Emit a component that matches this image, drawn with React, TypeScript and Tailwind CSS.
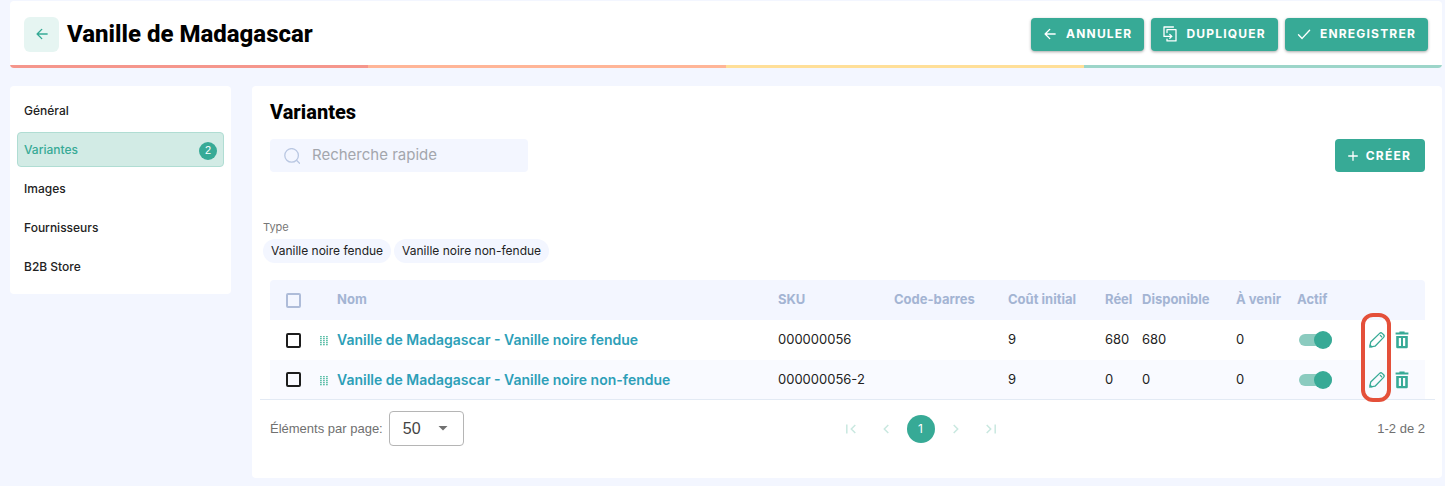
import { useState, type ReactNode } from "react";

const navItems = [
  { label: "Général" },
  { label: "Variantes", count: 2 },
  { label: "Images" },
  { label: "Fournisseurs" },
  { label: "B2B Store" },
];

const variants = [
  { name: "Vanille de Madagascar - Vanille noire fendue", sku: "000000056", cost: 9, real: 680, available: 680, incoming: 0 },
  { name: "Vanille de Madagascar - Vanille noire non-fendue", sku: "000000056-2", cost: 9, real: 0, available: 0, incoming: 0 },
];

const types = ["Vanille noire fendue", "Vanille noire non-fendue"];

function ArrowLeft() {
  return (
    <svg width="12" height="12" viewBox="0 0 14 14" fill="none" stroke="currentColor" strokeWidth="1.6" strokeLinecap="round" strokeLinejoin="round" aria-hidden="true">
      <path d="M13 7H1.5M6.7 1.6 1.3 7l5.4 5.4" />
    </svg>
  );
}

function DuplicateIcon() {
  return (
    <svg width="14" height="16" viewBox="0 0 14 16" fill="none" stroke="currentColor" strokeWidth="1.3" strokeLinecap="round" strokeLinejoin="round" aria-hidden="true">
      <path d="M4 6.6V3.7h9v11.2H4v-1.8" />
      <path d="M10.4 1H1v9.4h7.6" />
      <path d="m6.8 8.5 2 1.9-2 1.9" />
    </svg>
  );
}

function CheckIcon() {
  return (
    <svg width="14" height="14" viewBox="0 0 14 14" fill="none" stroke="currentColor" strokeWidth="1.4" strokeLinecap="round" strokeLinejoin="round" aria-hidden="true">
      <path d="m1.5 7.8 3.6 3.6L12.6 3.2" />
    </svg>
  );
}

function PlusIcon() {
  return (
    <svg width="10" height="10" viewBox="0 0 10 10" fill="none" stroke="currentColor" strokeWidth="1.3" strokeLinecap="round" aria-hidden="true">
      <path d="M5 .7v8.6M.7 5h8.6" />
    </svg>
  );
}

function SearchIcon() {
  return (
    <svg width="16" height="16" viewBox="0 0 16 16" fill="none" stroke="#b9c7e2" strokeWidth="1.3" strokeLinecap="round" aria-hidden="true">
      <circle cx="7.6" cy="7.4" r="6.8" />
      <path d="m12.5 12.3 3 3" />
    </svg>
  );
}

function DragIcon() {
  return (
    <svg width="8" height="10" viewBox="0 0 8 10" className="mt-0.5" fill="#5fc0aa" aria-hidden="true">
      {[0, 2, 4, 6, 8].map((y) =>
        [0, 3, 6].map((x) => <rect key={`${x}-${y}`} x={x} y={y} width="1.8" height="1.3" />)
      )}
    </svg>
  );
}

function PencilIcon() {
  return (
    <svg width="16" height="16" viewBox="0 0 16 16" fill="none" stroke="currentColor" strokeWidth="1.3" strokeLinecap="round" strokeLinejoin="round" aria-hidden="true">
      <path d="M.8 15.2 1.7 10 10.6 1.4a1.9 1.9 0 0 1 2.6 0l1.4 1.4a1.9 1.9 0 0 1 0 2.6L6 14.2Z" />
      <path d="M1.1 13.2l1.7 1.6" />
      <path d="m11.3 3.4 1.4 1.4" />
    </svg>
  );
}

function TrashIcon() {
  return (
    <svg width="14" height="18" viewBox="0 0 14 18" fill="currentColor" fillRule="evenodd" aria-hidden="true">
      <path d="M4.4.6h5.2v1H13.4v1.9H.6V1.6h3.8Z" />
      <path d="M1.2 4.9h11.6v11.2a1.2 1.2 0 0 1-1.2 1.2H2.4a1.2 1.2 0 0 1-1.2-1.2Zm2.6 2.2v8h2.2v-8Zm4.2 0v8h2.2v-8Z" />
    </svg>
  );
}

function PageArrow({ d }: { d: string }) {
  return (
    <svg width="12" height="12" viewBox="0 0 12 12" fill="none" stroke="currentColor" strokeWidth="1.5" aria-hidden="true">
      <path d={d} />
    </svg>
  );
}

function ActionButton({ icon, children }: { icon: ReactNode; children: ReactNode }) {
  return (
    <button className="flex h-[33px] items-center gap-2 rounded bg-[#37aa96] pr-3 pl-[11px] text-xs font-bold tracking-widest text-white shadow-[0_1px_3px_rgba(0,0,0,0.35)]">
      <span className="flex w-4 justify-center">{icon}</span>
      {children}
    </button>
  );
}

function Checkbox({ label, muted }: { label: string; muted?: boolean }) {
  return (
    <input
      type="checkbox"
      aria-label={label}
      className={
        muted
          ? "block size-[15px] appearance-none rounded-xs border-2 border-[#aebcd9] checked:bg-[#aebcd9]"
          : "block size-[15px] appearance-none rounded-xs border-2 border-[#1d1d1d] checked:bg-[#37aa96]"
      }
    />
  );
}

function Toggle({ label }: { label: string }) {
  return (
    <input
      type="checkbox"
      role="switch"
      defaultChecked
      aria-label={label}
      className="ml-0.5 flex h-3 w-[33px] appearance-none items-center rounded-full bg-[#c5cbd6] before:size-[18px] before:shrink-0 before:rounded-full before:bg-[#8d97a8] checked:justify-end checked:bg-[#8bcbbf] checked:before:bg-[#37aa96]"
    />
  );
}

export default function App() {
  const [active, setActive] = useState("Variantes");

  return (
    <div className="min-h-screen bg-[#f3f6ff] pt-px pr-[3px] pb-2 pl-2.5 font-['Inter','Noto_Sans',sans-serif] text-[13px] text-[#222]">
      <header className="overflow-hidden rounded bg-white">
        <div className="flex h-16 items-center justify-between px-3.5 pt-0.5">
          <div className="flex items-center gap-2">
            <button aria-label="Retour" className="flex size-[35px] items-center justify-center rounded-md bg-[#e6f5f2] text-[#37aa96]">
              <ArrowLeft />
            </button>
            <h1 className="font-['Roboto',sans-serif] text-2xl font-extrabold text-black">Vanille de Madagascar</h1>
          </div>
          <div className="flex gap-[7px]">
            <ActionButton icon={<ArrowLeft />}>ANNULER</ActionButton>
            <ActionButton icon={<DuplicateIcon />}>DUPLIQUER</ActionButton>
            <ActionButton icon={<CheckIcon />}>ENREGISTRER</ActionButton>
          </div>
        </div>
        <div className="grid h-[3px] grid-cols-4">
          <span className="bg-[#f5968c]" />
          <span className="bg-[#ffb597]" />
          <span className="bg-[#ffdf98]" />
          <span className="bg-[#9cd5c9]" />
        </div>
      </header>

      <div className="mt-[18px] flex items-start gap-[21px]">
        <nav className="flex w-[221px] shrink-0 flex-col gap-1 rounded bg-white px-[7px] pt-[7px] pb-2.5 text-xs font-medium">
          {navItems.map((item) => (
            <a
              key={item.label}
              href="#"
              onClick={() => setActive(item.label)}
              className={
                item.label === active
                  ? "flex h-[35px] items-center justify-between rounded border border-[#b0ddd3] bg-[#d2ebe5] px-1.5 text-[#37aa96]"
                  : "flex h-[35px] items-center justify-between rounded border border-transparent px-1.5"
              }
            >
              {item.label}
              {item.count && (
                <span className="mt-0.5 flex size-[18px] items-center justify-center rounded-full bg-[#37aa96] font-['Liberation_Sans',sans-serif] text-[11px] text-white">
                  {item.count}
                </span>
              )}
            </a>
          ))}
        </nav>

        <main className="min-w-0 flex-1 rounded bg-white pt-3.5 pb-8">
          <div className="pr-[17px] pl-[18px]">
            <h2 className="font-['Roboto',sans-serif] text-xl leading-6 font-extrabold text-black">Variantes</h2>
            <div className="mt-[15px] flex items-center justify-between">
              <label className="flex h-[33px] w-[258px] items-center gap-3 rounded bg-[#f3f6ff] px-3.5">
                <SearchIcon />
                <input
                  type="search"
                  aria-label="Recherche rapide"
                  placeholder="Recherche rapide"
                  className="min-w-0 flex-1 bg-transparent text-[15px] outline-none placeholder:text-[#a3a6ad]"
                />
              </label>
              <button className="flex h-[33px] items-center gap-2 rounded bg-[#37aa96] pr-3.5 pl-[13px] text-xs font-bold tracking-widest text-white">
                <PlusIcon />
                CRÉER
              </button>
            </div>
          </div>

          <section className="mt-[47px] px-[11px]">
            <h3 className="text-[11px] leading-4 text-[#777]">Type</h3>
            <ul className="mt-1 flex gap-[3px]">
              {types.map((type) => (
                <li key={type} className="flex h-6 items-center rounded-full bg-[#f3f6ff] px-2 text-[12px]">
                  {type}
                </li>
              ))}
            </ul>
          </section>

          <div className="mr-[7px] ml-2 mt-[17px] border-b border-[#e3eaf4] px-2.5">
            <div className="relative">
              <table className="w-full table-fixed text-left">
                <colgroup>
                  <col className="w-[50px]" />
                  <col className="w-[17px]" />
                  <col />
                  <col className="w-[116px]" />
                  <col className="w-[114px]" />
                  <col className="w-[97px]" />
                  <col className="w-[37px]" />
                  <col className="w-[94px]" />
                  <col className="w-[61px]" />
                  <col className="w-[72px]" />
                  <col className="w-14" />
                </colgroup>
                <thead>
                  <tr className="h-10 bg-[#f3f6ff] text-[13px] whitespace-nowrap text-[#a3b4d3]">
                    <th className="rounded-tl pl-4"><Checkbox label="Tout sélectionner" muted /></th>
                    <th />
                    <th>Nom</th>
                    <th>SKU</th>
                    <th>Code-barres</th>
                    <th>Coût initial</th>
                    <th>Réel</th>
                    <th>Disponible</th>
                    <th>À venir</th>
                    <th>Actif</th>
                    <th className="rounded-tr" />
                  </tr>
                </thead>
                <tbody>
                  {variants.map((v) => (
                    <tr key={v.sku} className="h-10 last:h-[39px] even:bg-[#f9faff]">
                      <td className="pl-4"><Checkbox label={v.name} /></td>
                      <td><DragIcon /></td>
                      <td className="text-sm font-semibold text-[#2d9fb8]"><a href="#">{v.name}</a></td>
                      <td>{v.sku}</td>
                      <td />
                      <td>{v.cost}</td>
                      <td>{v.real}</td>
                      <td>{v.available}</td>
                      <td>{v.incoming}</td>
                      <td><Toggle label={`Actif : ${v.name}`} /></td>
                      <td>
                        <div className="flex items-center gap-2.5 text-[#37aa96]">
                          <button aria-label="Modifier"><PencilIcon /></button>
                          <button aria-label="Supprimer"><TrashIcon /></button>
                        </div>
                      </td>
                    </tr>
                  ))}
                </tbody>
              </table>
              <div className="pointer-events-none absolute top-[33px] right-[34px] h-[89px] w-[30px] rounded-xl border-4 border-[#e4503a]" />
            </div>
          </div>

          <footer className="mt-[11px] flex items-center justify-between pr-[17px] pl-[18px] font-['Liberation_Sans',sans-serif] text-[#707070]">
            <label className="flex items-center gap-1.5">
              Éléments par page:
              <span className="relative flex items-center">
                <select className="h-[35px] w-[75px] appearance-none rounded border border-[#b5b5b5] bg-white px-[13px] font-['Liberation_Sans',sans-serif] text-base text-[#444]">
                  <option>50</option>
                  <option>100</option>
                </select>
                <svg className="pointer-events-none absolute right-4" width="10" height="5" viewBox="0 0 10 5" fill="#707070" aria-hidden="true">
                  <path d="M.5 0h9L5 4.6Z" />
                </svg>
              </span>
            </label>
            <div className="flex items-center gap-[7px] text-[#c9e8e0]">
              <button aria-label="Première page" className="flex w-7 justify-center"><PageArrow d="M1.8 1.5v9M10.3 2 6.3 6l4 4" /></button>
              <button aria-label="Page précédente" className="flex w-7 justify-center"><PageArrow d="M8.3 2l-4 4 4 4" /></button>
              <button className="size-7 rounded-full bg-[#37aa96] font-['Inter',sans-serif] text-xs text-white">1</button>
              <button aria-label="Page suivante" className="flex w-7 justify-center"><PageArrow d="M3.7 2l4 4-4 4" /></button>
              <button aria-label="Dernière page" className="flex w-7 justify-center"><PageArrow d="M10.2 1.5v9M1.7 2l4 4-4 4" /></button>
            </div>
            <p>1-2 de 2</p>
          </footer>
        </main>
      </div>
    </div>
  );
}
